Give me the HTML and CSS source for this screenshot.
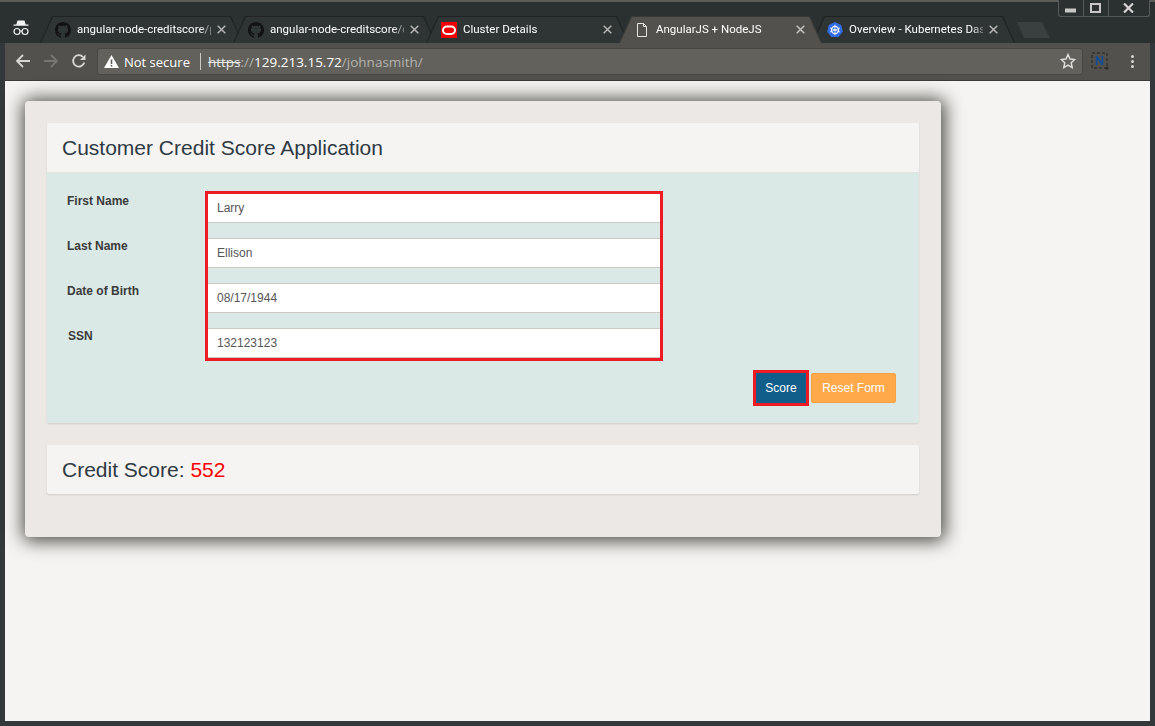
FILE: index.html
```html
<!DOCTYPE html>
<html lang="en">
<head>
<meta charset="utf-8">
<title>AngularJS + NodeJS</title>
<link rel="stylesheet" href="styles.css">
</head>
<body>
<div class="window">
  <header class="strip">
    <div class="incognito">
      <svg width="18" height="18" viewBox="0 0 18 18"><path d="M5.500 1.500h7l1.200 4H16.500v1.300H1.500V5.500h2.800z" fill="#f2f2f2"/><circle cx="5" cy="12.500" r="3" fill="none" stroke="#f2f2f2" stroke-width="1.200"/><circle cx="13" cy="12.500" r="3" fill="none" stroke="#f2f2f2" stroke-width="1.200"/><path d="M8 12h2" stroke="#f2f2f2" stroke-width="1.200"/></svg>
    </div>
    <div class="tabs">
      <div class="tab">
        <svg class="ico" width="16" height="16" viewBox="0 0 16 16"><path fill="#121212" d="M8 0C3.58 0 0 3.58 0 8c0 3.54 2.29 6.53 5.47 7.59.4.07.55-.17.55-.38 0-.19-.01-.82-.01-1.490-2.010.37-2.530-.49-2.690-.94-.09-.23-.48-.94-.82-1.130-.28-.15-.68-.52-.01-.53.63-.01 1.080.58 1.230.82.72 1.210 1.870.87 2.330.66.07-.52.28-.87.51-1.070-1.780-.2-3.640-.89-3.640-3.950 0-.87.31-1.590.82-2.150-.08-.2-.36-1.020.08-2.120 0 0 .67-.21 2.200.82.64-.18 1.320-.27 2-.27.68 0 1.360.09 2 .27 1.530-1.040 2.200-.82 2.200-.82.44 1.100.16 1.920.08 2.120.51.56.82 1.270.82 2.150 0 3.070-1.870 3.750-3.650 3.950.29.25.54.73.54 1.480 0 1.070-.01 1.930-.01 2.200 0 .21.15.46.55.38A8.013 8.013 0 0016 8c0-4.420-3.580-8-8-8z"/></svg>
        <span class="tab-title">angular-node-creditscore/p</span>
        <svg class="close" width="9" height="9" viewBox="0 0 9 9"><path d="M.7.7l7.600 7.600M8.300.7L.7 8.300" stroke="#b5b5b3" stroke-width="1.500"/></svg>
      </div>
      <div class="tab">
        <svg class="ico" width="16" height="16" viewBox="0 0 16 16"><path fill="#121212" d="M8 0C3.58 0 0 3.58 0 8c0 3.54 2.29 6.53 5.47 7.59.4.07.55-.17.55-.38 0-.19-.01-.82-.01-1.490-2.010.37-2.530-.49-2.690-.94-.09-.23-.48-.94-.82-1.130-.28-.15-.68-.52-.01-.53.63-.01 1.080.58 1.230.82.72 1.210 1.870.87 2.330.66.07-.52.28-.87.51-1.070-1.780-.2-3.640-.89-3.640-3.950 0-.87.31-1.590.82-2.150-.08-.2-.36-1.020.08-2.120 0 0 .67-.21 2.200.82.64-.18 1.320-.27 2-.27.68 0 1.360.09 2 .27 1.530-1.040 2.200-.82 2.200-.82.44 1.100.16 1.920.08 2.120.51.56.82 1.270.82 2.150 0 3.070-1.870 3.750-3.650 3.950.29.25.54.73.54 1.480 0 1.070-.01 1.930-.01 2.200 0 .21.15.46.55.38A8.013 8.013 0 0016 8c0-4.420-3.580-8-8-8z"/></svg>
        <span class="tab-title">angular-node-creditscore/c</span>
        <svg class="close" width="9" height="9" viewBox="0 0 9 9"><path d="M.7.7l7.600 7.600M8.300.7L.7 8.300" stroke="#b5b5b3" stroke-width="1.500"/></svg>
      </div>
      <div class="tab">
        <svg class="ico" width="16" height="16" viewBox="0 0 16 16"><rect width="16" height="16" fill="#f00000"/><rect x="2" y="4.500" width="12" height="7.500" rx="3.700" fill="none" stroke="#fff" stroke-width="2"/></svg>
        <span class="tab-title">Cluster Details</span>
        <svg class="close" width="9" height="9" viewBox="0 0 9 9"><path d="M.7.7l7.600 7.600M8.300.7L.7 8.300" stroke="#b5b5b3" stroke-width="1.500"/></svg>
      </div>
      <div class="tab tab-active">
        <svg class="ico" width="16" height="16" viewBox="0 0 16 16"><path d="M3.500 1.500h6l3 3v10h-9z M9.500 1.500v3h3" fill="none" stroke="#e4e4e2"/></svg>
        <span class="tab-title">AngularJS + NodeJS</span>
        <svg class="close" width="9" height="9" viewBox="0 0 9 9"><path d="M.7.7l7.600 7.600M8.300.7L.7 8.300" stroke="#c4c4c2" stroke-width="1.500"/></svg>
      </div>
      <div class="tab">
        <svg class="ico" width="16" height="16" viewBox="0 0 16 16"><path d="M8 0l6.200 3 1.600 6.700-4.300 5.400h-7L.2 9.700 1.800 3z" fill="#326ce5"/><circle cx="8" cy="8" r="3.600" fill="none" stroke="#fff" stroke-width="1.100"/><path d="M8 2.800v10.400M3 6l10 4M13 6L3 10" stroke="#fff" stroke-width=".8"/></svg>
        <span class="tab-title">Overview - Kubernetes Das</span>
        <svg class="close" width="9" height="9" viewBox="0 0 9 9"><path d="M.7.7l7.600 7.600M8.300.7L.7 8.300" stroke="#b5b5b3" stroke-width="1.500"/></svg>
      </div>
      <div class="newtab"></div>
    </div>
    <div class="controls">
      <div class="ctl ctl-min"><svg width="11" height="5" viewBox="0 0 11 5"><rect width="11" height="4" y=".5" fill="#c8c8c6"/></svg></div>
      <div class="ctl ctl-max"><svg width="11" height="10" viewBox="0 0 11 10"><rect x="1" y="1" width="9" height="8" fill="none" stroke="#c8c8c6" stroke-width="2"/></svg></div>
      <div class="ctl ctl-close"><svg width="11" height="10" viewBox="0 0 11 10"><path d="M1 .5l9 9M10 .5l-9 9" stroke="#d4d4d2" stroke-width="2.200"/></svg></div>
    </div>
  </header>

  <nav class="toolbar">
    <svg class="nav-btn" width="16" height="16" viewBox="0 0 16 16"><path d="M15 8H2M8 2L2 8l6 6" fill="none" stroke="#d6d6d4" stroke-width="1.800"/></svg>
    <svg class="nav-btn" width="16" height="16" viewBox="0 0 16 16"><path d="M1 8h13M8 2l6 6-6 6" fill="none" stroke="#767672" stroke-width="1.800"/></svg>
    <svg class="nav-btn" width="16" height="16" viewBox="0 0 16 16"><path d="M13.300 9.500A5.700 5.700 0 1 1 12 4" fill="none" stroke="#d6d6d4" stroke-width="1.800"/><path d="M14.500 1.500v5.500H9z" fill="#d6d6d4"/></svg>
    <div class="omnibox">
      <svg class="warn" width="15" height="13" viewBox="0 0 15 13"><path d="M7.500 0L15 13H0z" fill="#fff"/><rect x="6.700" y="4.500" width="1.600" height="4.500" fill="#5f5e58"/><rect x="6.700" y="10" width="1.600" height="1.600" fill="#5f5e58"/></svg>
      <span class="secure">Not secure</span>
      <span class="sep"></span>
      <span class="url"><s class="scheme">https</s><span class="dim">://</span>129.213.15.72<span class="dim">/johnasmith/</span></span>
      <svg class="star" width="16" height="16" viewBox="0 0 16 16"><path d="M8 1.500l2 4.500 4.800.5-3.600 3.200 1 4.800L8 12.100l-4.200 2.400 1-4.800L1.200 6.500 6 6z" fill="none" stroke="#e0e0de" stroke-width="1.400"/></svg>
    </div>
    <svg class="ext" width="18" height="18" viewBox="0 0 18 18"><rect x="1" y="1" width="15" height="15" fill="none" stroke="#24241f" stroke-dasharray="3 2"/><path d="M4.800 13V4h1.600l4 6V4h1.800v9h-1.600l-4-6v6z" fill="#0f4c94"/><path d="M14 16h4M16 14v4" stroke="#2b2b27"/></svg>
    <div class="dots"><i></i><i></i><i></i></div>
  </nav>

  <main class="page">
    <section class="card">
      <div class="panel">
        <h1 class="panel-head">Customer Credit Score Application</h1>
        <div class="panel-body">
          <div class="form-row">
            <div class="labels">
              <label>First Name</label>
              <label>Last Name</label>
              <label>Date of Birth</label>
              <label class="label-ssn">SSN</label>
            </div>
            <div class="fields">
              <div class="field">Larry</div>
              <div class="field">Ellison</div>
              <div class="field">08/17/1944</div>
              <div class="field">132123123</div>
            </div>
          </div>
          <div class="actions">
            <button class="btn btn-score" type="button">Score</button>
            <button class="btn btn-reset" type="button">Reset Form</button>
          </div>
        </div>
      </div>
      <div class="panel result">
        <h2 class="panel-head">Credit Score: <span class="score">552</span></h2>
      </div>
    </section>
  </main>
</div>
</body>
</html>
```
FILE: styles.css
```css
* { box-sizing: border-box; }
html, body { margin: 0; height: 100%; }
body { font-family: "Liberation Sans", Arial, sans-serif; background: #2d3233; overflow: hidden; }

.window {
  width: 1155px;
  height: 726px;
  display: flex;
  flex-direction: column;
  border: solid #33383a;
  border-width: 0 5px 5px;
  background: #2b3030;
}

/* tab strip */
.strip {
  height: 43px;
  display: flex;
  align-items: flex-end;
  margin: 0 -5px;
  padding: 0 5px;
  background: linear-gradient(#5b5b58 0 2px, #2b3030 2px);
  flex: none;
}
.incognito { width: 35px; height: 27px; padding: 3px 0 0 7px; flex: none; }
.tabs { display: flex; height: 27px; flex: none; }
.tab {
  position: relative;
  width: 203px;
  height: 27px;
  margin-right: -10px;
  padding: 0 15px 0 15px;
  display: flex;
  align-items: center;
  flex: none;
  color: #fff;
  font-size: 12px;
}
.tab::before, .tab::after {
  content: "";
  position: absolute;
  clip-path: polygon(12px 0, calc(100% - 12px) 0, 100% 100%, 0 100%);
}
.tab::before { inset: 0; background: #1f2323; }
.tab::after { inset: 1px 1px 0; background: #2f3535; }
.tab-active { z-index: 2; }
.tab-active::before { background: #3a3a37; }
.tab-active::after { background: #52514d; }
.tab > * { position: relative; z-index: 1; }
.ico { flex: none; margin-right: 6px; }
.tab-title {
  flex: 1;
  min-width: 0;
  padding-bottom: 1px;
  white-space: nowrap;
  overflow: hidden;
  font-family: Roboto, "Liberation Sans", sans-serif;
  font-size: 11.500px;
  -webkit-mask-image: linear-gradient(to right, #000 calc(100% - 12px), rgba(0,0,0,.35));
  mask-image: linear-gradient(to right, #000 calc(100% - 12px), rgba(0,0,0,.35));
}
.close { flex: none; margin-left: 6px; margin-right: 2px; }
.newtab {
  width: 33px;
  height: 16px;
  margin: 6px 0 5px 12px;
  background: #3a3f3f;
  clip-path: polygon(0 0, 25px 0, 100% 100%, 7px 100%);
  flex: none;
}

.controls {
  margin-left: auto;
  align-self: flex-start;
  width: 92px;
  height: 17px;
  display: flex;
  border: 1px solid #55595a;
  border-top: 0;
  border-radius: 0 0 3px 3px;
  background: #2b3030;
}
.ctl { display: flex; align-items: center; justify-content: center; height: 16px; }
.ctl-min { width: 25px; border-right: 1px solid #55595a; padding: 5px 2px 0 0; }
.ctl-max { width: 25px; border-right: 1px solid #55595a; padding-right: 2px; }
.ctl-close { flex: 1; padding-right: 2px; }

/* toolbar */
.toolbar {
  height: 38px;
  flex: none;
  display: flex;
  align-items: center;
  padding: 0 0 1px 10px;
  background: #52514d;
  border-bottom: 1px solid #3a3a38;
}
.nav-btn { flex: none; margin-right: 12px; }
.omnibox {
  width: 986px;
  height: 27px;
  margin-left: -2px;
  display: flex;
  align-items: center;
  padding: 0 6px;
  background: #62615b;
  border: 1px solid #474743;
  border-radius: 3px;
  color: #fff;
  white-space: nowrap;
}
.warn { flex: none; margin-right: 5px; }
.secure { font-family: "Open Sans", "Liberation Sans", sans-serif; font-size: 13px; padding-top: 1px; }
.sep { width: 1px; height: 17px; margin: 0 7px 0 10px; background: #c9c9c6; }
.url { flex: 1; font-family: "Open Sans", "Liberation Sans", sans-serif; font-size: 13.500px; padding-top: 1px; }
.scheme { color: #e8e8e6; }
.dim { color: #b4b3ae; }
.star { flex: none; }
.ext { flex: none; margin-left: 8px; }
.dots { margin-left: 22px; display: flex; flex-direction: column; gap: 2px; }
.dots i { width: 3px; height: 3px; background: #d6d6d4; border-radius: 50%; display: block; }

/* page */
.page { flex: 1; padding: 20px; background: #f5f4f2; min-height: 0; }
.card {
  width: 916px;
  padding: 22px 22px 43px;
  background: #ece8e5;
  border-radius: 4px;
  box-shadow: 1px 1px 18px 3px rgba(30, 30, 25, .8);
}
.panel {
  background: #f5f4f2;
  border-radius: 2px;
  box-shadow: 0 1px 2px rgba(0, 0, 0, .12);
}
.panel-head {
  height: 49px;
  margin: 0;
  padding: 0 15px;
  display: flex;
  align-items: center;
  font-size: 21px;
  font-weight: 400;
  color: #2f3a44;
  white-space: pre;
}
.panel-body {
  padding: 18px 23px 17px 20px;
  background: #dae9e6;
  border-top: 1px solid #e3e3e0;
}
.form-row { display: flex; }
.labels {
  width: 138px;
  height: 170px;
  padding-top: 3px;
  display: flex;
  flex-direction: column;
  font-size: 12px;
  font-weight: 700;
  color: #3b3b3b;
}
.labels label { height: 45px; line-height: 14px; flex: none; }
.label-ssn { padding-left: 1px; }
.fields {
  width: 458px;
  height: 170px;
  border: 3px solid #ed1c24;
  overflow: hidden;
  display: flex;
  flex-direction: column;
  gap: 15px;
}
.field {
  height: 30px;
  flex: none;
  padding: 0 9px;
  display: flex;
  align-items: center;
  background: #fff;
  border: solid #cdc9c4;
  border-width: 1px 0;
  font-size: 12px;
  color: #555;
}
.field:first-child { height: 29px; border-top: 0; }
.actions { display: flex; justify-content: flex-end; align-items: center; gap: 2px; margin-top: 9px; }
.btn {
  font: 12px "Liberation Sans", Arial, sans-serif;
  color: #fff;
  padding: 0;
  cursor: pointer;
}
.btn-score { width: 56px; height: 36px; background: #115e8b; border: 3px solid #ed1c24; }
.btn-reset { width: 85px; height: 30px; background: #ffa94b; border: 1px solid #f5a142; border-radius: 2px; }

.result { margin-top: 22px; }
.score { color: #fe0000; }
```
